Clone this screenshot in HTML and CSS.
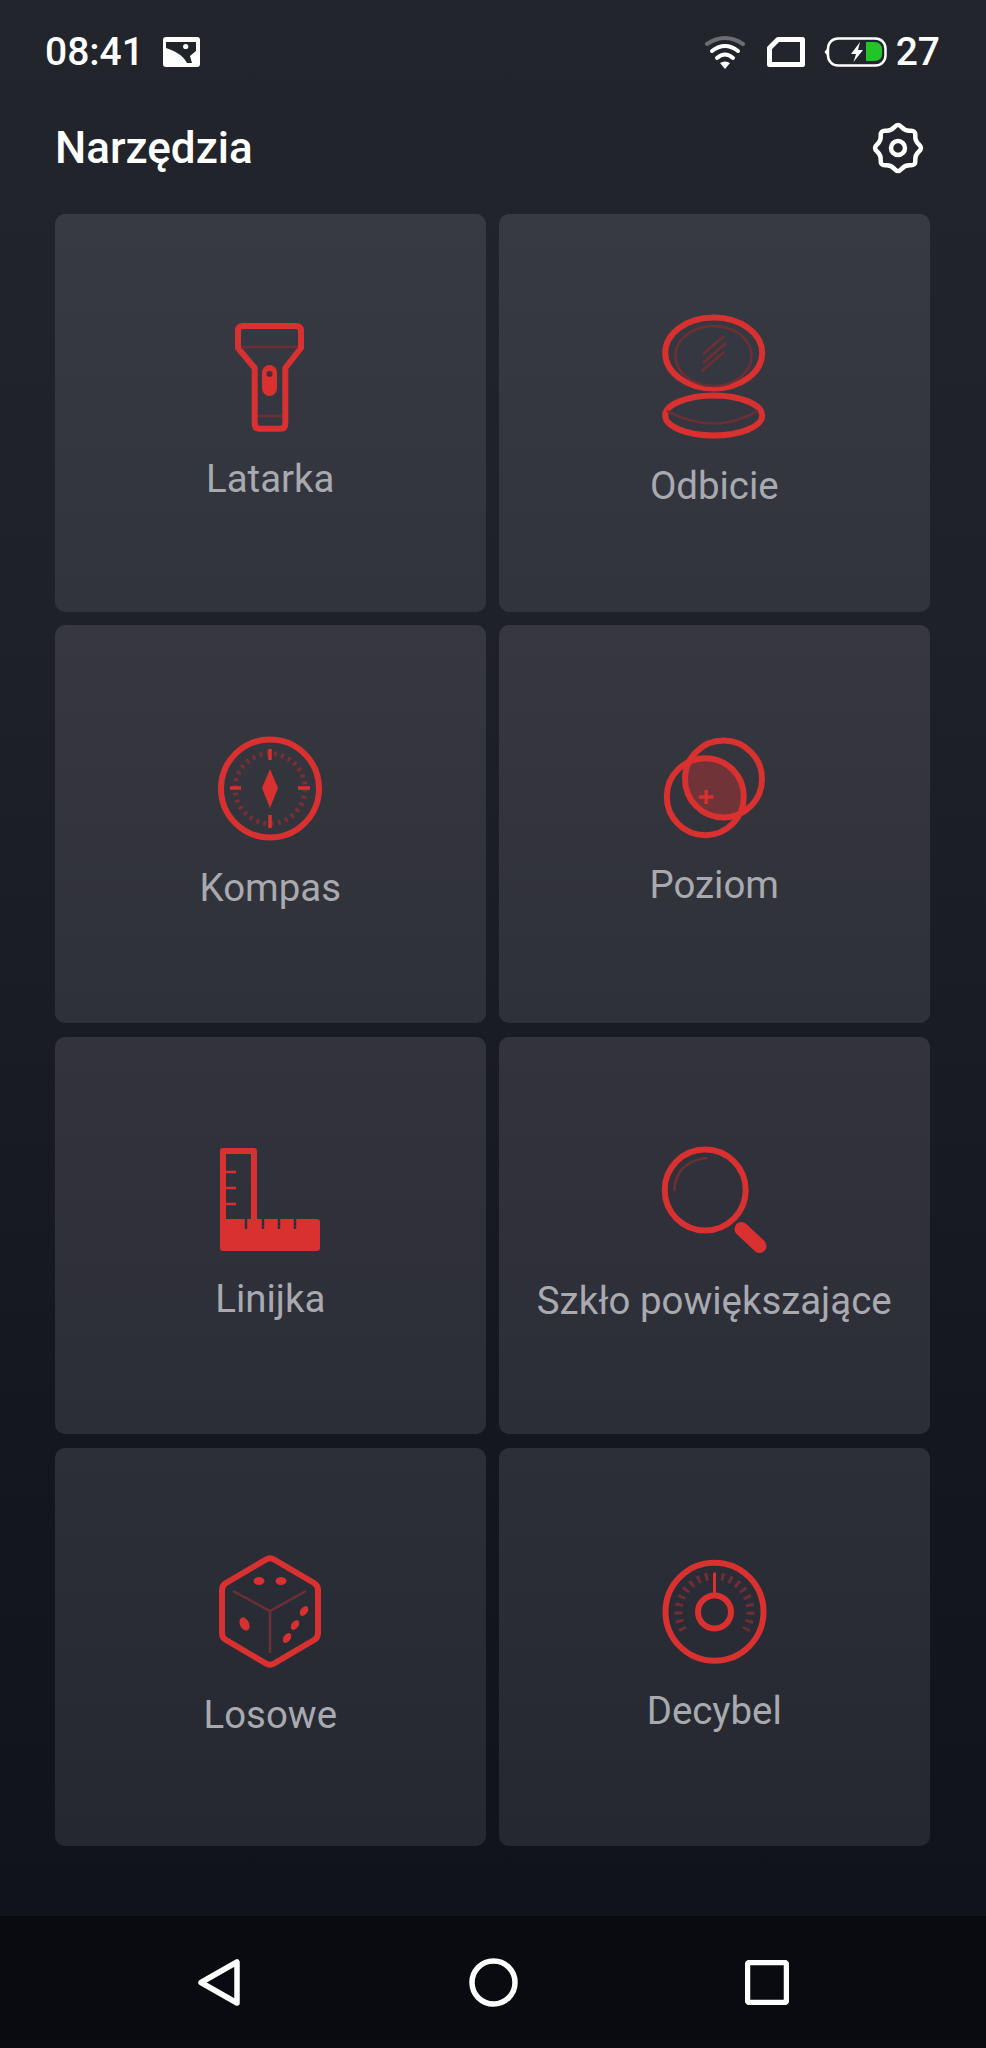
FILE: index.html
```html
<!DOCTYPE html>
<html lang="pl">
<head>
    <meta charset="UTF-8">
    <meta name="viewport" content="width=device-width, initial-scale=1.0">
    <title>Narzędzia</title>
    <link rel="stylesheet" href="styles.css">
</head>
<body>
    <!-- Status bar -->
    <div class="status-bar">
        <div class="status-left">
            <span class="clock">08:41</span>
            <svg class="icon-image" viewBox="0 0 37 30">
                <rect width="37" height="30" rx="3" fill="#fff"/>
                <path d="M3 5H33V14L27 19L29 26H24C20 18 12 14 3 11Z" fill="#22242c"/>
                <circle cx="22.7" cy="9.5" r="2.6" fill="#fff"/>
            </svg>
        </div>
        <div class="status-right">
            <svg class="icon-wifi" viewBox="0 0 42 35" fill="none" stroke-linecap="round">
                <path d="M3 9Q21 -3 39 9" stroke="#6d6e74" stroke-width="4"/>
                <path d="M8 16Q21 6 34 16" stroke="#fff" stroke-width="4"/>
                <path d="M13 23Q21 16 29 23" stroke="#fff" stroke-width="4"/>
                <path d="M16 28Q21 25 26 28L21 34Z" fill="#fff"/>
            </svg>
            <svg class="icon-sim" viewBox="0 0 38 30" fill="none">
                <path d="M2.500 11L11 2.500H35.500V27.500H2.500Z" stroke="#fff" stroke-width="5" stroke-linejoin="round"/>
            </svg>
            <svg class="icon-battery" viewBox="0 0 63 30" fill="none">
                <path d="M3.500 11L0.500 15L3.500 19Z" fill="#fff"/>
                <rect x="4" y="1.500" width="57.500" height="27" rx="10" stroke="#fff" stroke-width="2.500"/>
                <path d="M42 5H50Q58 5 58 13V17Q58 24 50 24H42Z" fill="#22c528"/>
                <path d="M36 5L27 17H32L29.500 25L39 13H34Z" fill="#fff"/>
            </svg>
            <span class="level">27</span>
        </div>
    </div>

    <!-- Title -->
    <div class="header">
        <h1>Narzędzia</h1>
        <svg class="icon-gear" viewBox="0 0 52 52" fill="none" stroke="#fff" stroke-width="4.500" stroke-linejoin="round">
            <path d="M22.500 5.050Q26 1 29.500 5.050Q33 9.100 38.340 8.710Q43.680 8.320 43.290 13.660Q42.900 19 46.950 22.500Q51 26 46.950 29.500Q42.900 33 43.290 38.340Q43.680 43.680 38.340 43.290Q33 42.900 29.500 46.950Q26 51 22.500 46.950Q19 42.900 13.660 43.290Q8.320 43.680 8.710 38.340Q9.100 33 5.050 29.500Q1 26 5.050 22.500Q9.100 19 8.710 13.660Q8.320 8.320 13.660 8.710Q19 9.100 22.500 5.050Z"/>
            <circle cx="26" cy="26" r="7"/>
        </svg>
    </div>

    <!-- Tool grid -->
    <div class="grid">
        <div class="card row-1 card-latarka">
            <svg class="tool-icon" viewBox="0 0 140 140" fill="none">
                <path d="M43 26H96Q101 26 101 31V48L85.300 68V123.700Q85.300 128.700 80.300 128.700H59.700Q54.700 128.700 54.700 123.700V68L38 48V31Q38 26 43 26Z" class="line"/>
                <path d="M41 47H98M58 116H82" class="dim"/>
                <rect x="62" y="65" width="15" height="31" rx="7.500" class="solid"/>
                <circle cx="69.500" cy="74" r="3" fill="#4b2e35"/>
            </svg>
            <div class="label">Latarka</div>
        </div>

        <div class="card row-1 card-odbicie">
            <svg class="tool-icon wide" viewBox="0 0 150 150" fill="none">
                <ellipse cx="74.700" cy="53" rx="48.500" ry="35.500" class="line"/>
                <ellipse cx="74.500" cy="56" rx="38" ry="30" class="dim"/>
                <path d="M64 54L85 36M64 63L87 43M63 71L85 52" class="dim"/>
                <ellipse cx="74.700" cy="115.500" rx="48.500" ry="20" class="line"/>
                <path d="M28 111Q75 136 119 111" class="dim"/>
            </svg>
            <div class="label">Odbicie</div>
        </div>

        <div class="card row-2 card-kompas">
            <svg class="tool-icon" viewBox="0 0 140 140" fill="none">
                <circle cx="70" cy="68.500" r="49" class="line"/>
                <circle cx="70" cy="68.500" r="35" stroke="#7a2f35" stroke-width="5" stroke-dasharray="3 4.330"/>
                <path d="M70 29V40M70 95V108M30 68H41M98 68H110" stroke="#d93030" stroke-width="3.500"/>
                <path d="M70 49L78 68L70 88L62 68Z" class="solid"/>
            </svg>
            <div class="label">Kompas</div>
        </div>

        <div class="card row-2 card-poziom">
            <svg class="tool-icon" viewBox="-5.500 0 140 140" fill="none">
                <defs>
                    <clipPath id="lens"><circle cx="74" cy="59" r="39"/></clipPath>
                </defs>
                <circle cx="55.800" cy="76.700" r="39" fill="#703338" clip-path="url(#lens)"/>
                <circle cx="55.800" cy="76.700" r="38.500" class="line"/>
                <circle cx="74" cy="59" r="38.500" class="line"/>
                <path d="M49.500 77H64M56.700 70V84" stroke="#d93030" stroke-width="3.500"/>
            </svg>
            <div class="label">Poziom</div>
        </div>

        <div class="card row-3 card-linijka">
            <svg class="tool-icon" viewBox="0 0 140 140" fill="none">
                <path d="M23 95V21H54V95" class="line"/>
                <rect x="20" y="89" width="100" height="32" rx="3" class="solid"/>
                <path d="M46 89V99M63 89V99M79 89V99M95 89V99" stroke="#2f3038" stroke-width="2.500"/>
                <path d="M26 42H36M26 58H36M26 74H36" stroke="#d93030" stroke-width="2.500"/>
            </svg>
            <div class="label">Linijka</div>
        </div>

        <div class="card row-3 card-szklo">
            <svg class="tool-icon" viewBox="-5.500 0 140 140" fill="none">
                <circle cx="55.700" cy="60" r="40.500" class="line"/>
                <path d="M25 60Q26 32 57 28" stroke="#6e2f34" stroke-width="2.500" stroke-linecap="round"/>
                <path d="M92 99L110 116" stroke="#d93030" stroke-width="14" stroke-linecap="round"/>
            </svg>
            <div class="label">Szkło powiększające</div>
        </div>

        <div class="card row-4 card-losowe">
            <svg class="tool-icon" viewBox="0 0 140 140" fill="none">
                <path d="M66 19.500Q70 17 74 19.500L114 43Q118 45.500 118 50V93Q118 98 114 100L74 123.500Q70 126 66 123.500L26 100Q22 98 22 93V50Q22 45.500 26 43Z" class="line"/>
                <path d="M33 51L70 71L106 51M70 71V113" class="dim"/>
                <ellipse cx="59" cy="41" rx="5.500" ry="4" class="solid"/>
                <ellipse cx="81" cy="41" rx="5.500" ry="4" class="solid"/>
                <ellipse cx="44.500" cy="84" rx="4.500" ry="7" transform="rotate(-25 44.500 84)" class="solid"/>
                <ellipse cx="104" cy="71" rx="3.500" ry="5.500" transform="rotate(35 104 71)" class="solid"/>
                <ellipse cx="95" cy="85" rx="3.500" ry="5.500" transform="rotate(35 95 85)" class="solid"/>
                <ellipse cx="87" cy="98" rx="3.500" ry="5.500" transform="rotate(35 87 98)" class="solid"/>
            </svg>
            <div class="label">Losowe</div>
        </div>

        <div class="card row-4 card-decybel">
            <svg class="tool-icon" viewBox="-5.500 0 140 140" fill="none">
                <circle cx="65" cy="71.700" r="49" class="line"/>
                <path d="M33.800 90A36 36 0 1 1 96.200 90" stroke="#6e2e34" stroke-width="8" stroke-dasharray="3 5.200"/>
                <circle cx="65" cy="72" r="16.500" class="line"/>
                <path d="M65 33V54" stroke="#d93030" stroke-width="3"/>
            </svg>
            <div class="label">Decybel</div>
        </div>
    </div>

    <!-- Navigation bar -->
    <div class="nav-bar">
        <svg class="nav-back" viewBox="0 0 42 47" fill="none" stroke="#fff" stroke-width="5.500" stroke-linejoin="round">
            <path d="M39 3V44L3 23.500Z"/>
        </svg>
        <svg class="nav-home" viewBox="0 0 49 49" fill="none" stroke="#fff" stroke-width="5.500">
            <circle cx="24.500" cy="24.500" r="21.500"/>
        </svg>
        <svg class="nav-recent" viewBox="0 0 44 45" fill="none" stroke="#fff" stroke-width="5.500" stroke-linejoin="round">
            <rect x="2.500" y="2.500" width="39" height="40" rx="2"/>
        </svg>
    </div>
</body>
</html>
```

FILE: styles.css
```css
* {
    box-sizing: border-box;
}
body {
    margin: 0;
    width: 986px;
    height: 2048px;
    display: flex;
    flex-direction: column;
    font-family: Roboto, Arial, sans-serif;
    color: #fff;
    background: linear-gradient(#23252d 0%, #1f2129 30%, #15171f 70%, #10121a 100%);
}

/* status bar */
.status-bar {
    height: 104px;
    padding: 0 46px 0 45px;
    display: flex;
    align-items: center;
    justify-content: space-between;
}
.status-left,
.status-right {
    display: flex;
    align-items: center;
}
.clock,
.level {
    font-size: 39px;
    line-height: 44px;
    font-weight: 500;
}
.icon-image {
    width: 37px;
    height: 30px;
    margin-left: 19px;
}
.icon-wifi {
    width: 42px;
    height: 35px;
    margin-right: 21px;
}
.icon-sim {
    width: 38px;
    height: 30px;
    margin-right: 19px;
}
.icon-battery {
    width: 63px;
    height: 30px;
    margin-right: 9px;
}

/* title row */
.header {
    height: 110px;
    padding: 0 62px 0 55px;
    display: flex;
    align-items: flex-start;
    justify-content: space-between;
}
h1 {
    margin: 16px 0 0;
    font-size: 44px;
    line-height: 56px;
    font-weight: 500;
}
.icon-gear {
    width: 52px;
    height: 52px;
    margin-top: 18px;
}

/* cards */
.grid {
    padding: 0 56.500px 0 55px;
    display: grid;
    grid-template-columns: 1fr 1fr;
    grid-auto-rows: 397.750px;
    gap: 13.500px;
}
.card {
    border-radius: 10px;
    display: flex;
    flex-direction: column;
    align-items: center;
}
.row-1 {
    padding-top: 86px;
    background: linear-gradient(#383a43, #32343d);
}
.row-2 {
    padding-top: 95px;
    background: linear-gradient(#36373f, #2f3139);
}
.row-3 {
    padding-top: 93px;
    background: linear-gradient(#32333c, #2c2e37);
}
.row-4 {
    padding-top: 92px;
    background: linear-gradient(#2d2f38, #262831);
}
.tool-icon {
    display: block;
    width: 140px;
    height: 140px;
    flex: none;
}
.tool-icon.wide {
    width: 150px;
    height: 150px;
}
.line {
    stroke: #d93030;
    stroke-width: 6;
    stroke-linejoin: round;
}
.dim {
    stroke: #6e2f34;
    stroke-width: 2.500;
}
.solid {
    fill: #d93030;
}
.label {
    font-size: 38.400px;
    line-height: 44px;
    color: #a9aab0;
    white-space: nowrap;
}
.card-latarka .label { margin-top: 17px; }
.card-odbicie .label { margin-top: 14px; }
.card-kompas .label { margin-top: 6px; }
.card-poziom .label { margin-top: 3px; }
.card-linijka .label { margin-top: 7px; }
.card-szklo .label { margin-top: 9px; }
.card-losowe .label { margin-top: 13px; }
.card-decybel .label { margin-top: 9px; }

/* navigation bar */
.nav-bar {
    margin-top: auto;
    height: 132px;
    padding: 0 82px;
    background-color: #0a0b10;
    display: grid;
    grid-template-columns: repeat(3, 274px);
    align-items: center;
    justify-items: center;
}
.nav-back {
    width: 42px;
    height: 47px;
}
.nav-home {
    width: 49px;
    height: 49px;
}
.nav-recent {
    width: 44px;
    height: 45px;
}
```
